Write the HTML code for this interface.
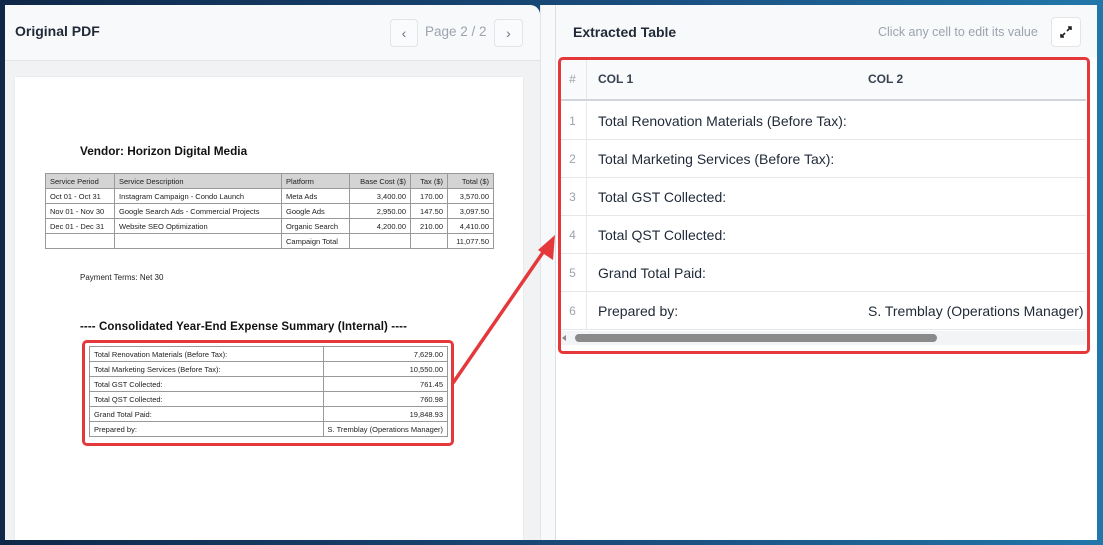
<!DOCTYPE html>
<html><head><meta charset="utf-8"><style>
*{box-sizing:border-box;margin:0;padding:0}
body{width:1103px;height:545px;overflow:hidden;background:linear-gradient(90deg,#0f2748,#1a4f80 60%,#2277aa);font-family:"Liberation Sans",sans-serif;position:relative}
.abs{position:absolute}
#left{left:5px;top:5px;width:535px;height:535px;background:#f1f2f4;border-top-right-radius:10px;overflow:hidden}
#lh{left:0;top:0;width:535px;height:56px;background:#f8f9fb;border-bottom:1px solid #e2e4e8}
.btn{border:1px solid #e3e5e9;border-radius:4px;background:#fafbfc;color:#6b7280;font-size:14px;text-align:center;line-height:26px}
#page{left:10px;top:72px;width:508px;height:470px;background:#fff;box-shadow:0 0 2px rgba(0,0,0,.08)}
table.p{border-collapse:collapse;font-size:7.5px;color:#222;position:absolute}
table.p td{border:1px solid #999;padding:0 4px;height:15px;white-space:nowrap}
.r{text-align:right}
#mid{left:540px;top:5px;width:16px;height:535px;background:#f8f9fb;border-left:1px solid #e3e5e9;border-right:1px solid #dcdfe3}
#right{left:556px;top:5px;width:541px;height:535px;background:#fff}
#rh{left:0;top:0;width:541px;height:52px;background:#f8f9fb}
.row{position:absolute;left:3px;width:527px;height:38px;border-bottom:1px solid #e5e7eb;font-size:14px;color:#1f2937}
.row .n{position:absolute;left:0;width:28px;height:100%;border-right:1px solid #e5e7eb;text-align:center;color:#9ca3af;font-size:12px;line-height:38px}
.row .c1{position:absolute;left:39px;line-height:38px}
.row .c2{position:absolute;left:309px;line-height:38px;white-space:nowrap}
</style></head><body>
<div id="left" class="abs">
 <div id="lh" class="abs">
  <div class="abs" style="left:10px;top:18px;font-size:14px;font-weight:bold;color:#1f2937">Original PDF</div>
  <div class="abs btn" style="left:385px;top:14px;width:28px;height:28px">‹</div>
  <div class="abs" style="left:420px;top:19px;font-size:13.5px;color:#9ca3af">Page 2 / 2</div>
  <div class="abs btn" style="left:489px;top:14px;width:29px;height:28px">›</div>
 </div>
 <div id="page" class="abs">
  <div class="abs" style="left:65px;top:67px;font-size:11.8px;font-weight:bold;color:#111">Vendor: Horizon Digital Media</div>
  <table class="p" style="left:30px;top:96px;width:449px">
   <tr style="background:#d4d4d4"><td style="width:69px">Service Period</td><td style="width:167px">Service Description</td><td style="width:68px">Platform</td><td class="r" style="width:61px">Base Cost ($)</td><td class="r" style="width:37px">Tax ($)</td><td class="r">Total ($)</td></tr>
   <tr><td>Oct 01 - Oct 31</td><td>Instagram Campaign - Condo Launch</td><td>Meta Ads</td><td class="r">3,400.00</td><td class="r">170.00</td><td class="r">3,570.00</td></tr>
   <tr><td>Nov 01 - Nov 30</td><td>Google Search Ads - Commercial Projects</td><td>Google Ads</td><td class="r">2,950.00</td><td class="r">147.50</td><td class="r">3,097.50</td></tr>
   <tr><td>Dec 01 - Dec 31</td><td>Website SEO Optimization</td><td>Organic Search</td><td class="r">4,200.00</td><td class="r">210.00</td><td class="r">4,410.00</td></tr>
   <tr><td></td><td></td><td>Campaign Total</td><td></td><td></td><td class="r">11,077.50</td></tr>
  </table>
  <div class="abs" style="left:65px;top:196px;font-size:8px;color:#222">Payment Terms: Net 30</div>
  <div class="abs" style="left:65px;top:244px;font-size:11.5px;font-weight:bold;color:#111;letter-spacing:0.1px">---- Consolidated Year-End Expense Summary (Internal) ----</div>
  <table class="p" style="left:74px;top:269px;width:359px">
   <tr><td style="width:239px">Total Renovation Materials (Before Tax):</td><td class="r">7,629.00</td></tr>
   <tr><td>Total Marketing Services (Before Tax):</td><td class="r">10,550.00</td></tr>
   <tr><td>Total GST Collected:</td><td class="r">761.45</td></tr>
   <tr><td>Total QST Collected:</td><td class="r">760.98</td></tr>
   <tr><td>Grand Total Paid:</td><td class="r">19,848.93</td></tr>
   <tr><td>Prepared by:</td><td class="r" style="overflow:visible">S. Tremblay (Operations Manager)</td></tr>
  </table>
  <div class="abs" style="left:67px;top:263px;width:372px;height:106px;border:3px solid #e5383b;border-radius:5px"></div>
 </div>
</div>
<div id="mid" class="abs"></div>
<div id="right" class="abs">
 <div id="rh" class="abs">
  <div class="abs" style="left:17px;top:19px;font-size:14px;font-weight:bold;color:#1f2937">Extracted Table</div>
  <div class="abs" style="left:322px;top:20px;font-size:12.5px;color:#9ca3af">Click any cell to edit its value</div>
  <div class="abs btn" style="left:495px;top:12px;width:30px;height:30px;background:#fff">
   <svg width="14" height="14" viewBox="0 0 14 14" style="margin-top:7px"><path d="M8 6L12 2M9 2h3v3M6 8L2 12M2 9v3h3" stroke="#222" stroke-width="1.6" fill="none"/></svg>
  </div>
 </div>
 <div class="abs" style="left:3px;top:53px;width:527px;height:43px;border-bottom:2px solid #d1d5db;background:#f9fafb;font-size:12px;font-weight:bold;color:#374151">
  <div class="abs" style="left:0;width:28px;height:100%;border-right:1px solid #e5e7eb;text-align:center;line-height:43px;color:#9ca3af;font-weight:normal">#</div>
  <div class="abs" style="left:39px;line-height:43px">COL 1</div>
  <div class="abs" style="left:309px;line-height:43px">COL 2</div>
 </div>
 <div class="row" style="top:97px"><div class="n">1</div><div class="c1">Total Renovation Materials (Before Tax):</div></div>
 <div class="row" style="top:135px"><div class="n">2</div><div class="c1">Total Marketing Services (Before Tax):</div></div>
 <div class="row" style="top:173px"><div class="n">3</div><div class="c1">Total GST Collected:</div></div>
 <div class="row" style="top:211px"><div class="n">4</div><div class="c1">Total QST Collected:</div></div>
 <div class="row" style="top:249px"><div class="n">5</div><div class="c1">Grand Total Paid:</div></div>
 <div class="row" style="top:287px"><div class="n">6</div><div class="c1">Prepared by:</div><div class="c2">S. Tremblay (Operations Manager)</div></div>
 <div class="abs" style="left:3px;top:326px;width:527px;height:14px;background:#f3f4f6"></div>
 <div class="abs" style="left:19px;top:329px;width:362px;height:8px;background:#8a8a8a;border-radius:4px"></div>
 <div class="abs" style="left:6px;top:330px;width:0;height:0;border-top:3px solid transparent;border-bottom:3px solid transparent;border-right:4px solid #888"></div>
 <div class="abs" style="left:2px;top:52px;width:532px;height:297px;border:3px solid #e5383b;border-radius:5px"></div>
</div>
<svg class="abs" style="left:0;top:0" width="1103" height="545">
 <line x1="453" y1="383" x2="546" y2="248" stroke="#e5383b" stroke-width="3.5"/>
 <polygon points="555,235 553,260 538,250" fill="#e5383b"/>
</svg>
</body></html>
